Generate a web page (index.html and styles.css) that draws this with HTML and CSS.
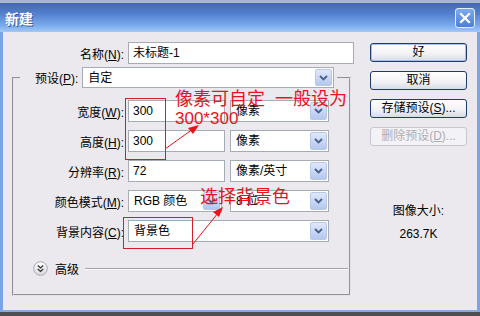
FILE: index.html
```html
<!DOCTYPE html>
<html lang="zh-CN">
<head>
  <meta charset="UTF-8">
  <title>新建</title>
  <link rel="stylesheet" href="styles.css">
</head>
<body>

<div class="window">
  <div class="titlebar">
    <span class="title">新建</span>
    <span class="close">
      <svg width="12" height="12" viewBox="0 0 12 12"><path d="M2 2 L10 10 M10 2 L2 10" stroke="#fff" stroke-width="2.2" stroke-linecap="square"/></svg>
    </span>
  </div>

  <div class="body">
    <div class="main">
      <div class="row name-row">
        <label class="lbl">名称(<u>N</u>):</label>
        <div class="field w-name">未标题-1</div>
      </div>

      <fieldset class="group">
        <legend>
          <div class="preset">
            <label>预设(<u>P</u>):</label>
            <div class="select w-preset"><span class="val">自定</span><span class="drop"><svg width="9" height="6" viewBox="0 0 9 6"><path d="M1 1 L4.5 4.5 L8 1" fill="none" stroke="#4a5f86" stroke-width="1.8"/></svg></span></div>
          </div>
        </legend>

        <div class="row">
          <label class="lbl">宽度(<u>W</u>):</label>
          <div class="field w-num">300</div>
          <div class="select w-unit"><span class="val">像素</span><span class="drop"><svg width="9" height="6" viewBox="0 0 9 6"><path d="M1 1 L4.5 4.5 L8 1" fill="none" stroke="#4a5f86" stroke-width="1.8"/></svg></span></div>
        </div>
        <div class="row">
          <label class="lbl">高度(<u>H</u>):</label>
          <div class="field w-num">300</div>
          <div class="select w-unit"><span class="val">像素</span><span class="drop"><svg width="9" height="6" viewBox="0 0 9 6"><path d="M1 1 L4.5 4.5 L8 1" fill="none" stroke="#4a5f86" stroke-width="1.8"/></svg></span></div>
        </div>
        <div class="row">
          <label class="lbl">分辨率(<u>R</u>):</label>
          <div class="field w-num">72</div>
          <div class="select w-unit"><span class="val">像素/英寸</span><span class="drop"><svg width="9" height="6" viewBox="0 0 9 6"><path d="M1 1 L4.5 4.5 L8 1" fill="none" stroke="#4a5f86" stroke-width="1.8"/></svg></span></div>
        </div>
        <div class="row">
          <label class="lbl">颜色模式(<u>M</u>):</label>
          <div class="select w-color"><span class="val">RGB 颜色</span><span class="drop"><svg width="9" height="6" viewBox="0 0 9 6"><path d="M1 1 L4.5 4.5 L8 1" fill="none" stroke="#4a5f86" stroke-width="1.8"/></svg></span></div>
          <div class="select w-depth"><span class="val">8 位</span><span class="drop"><svg width="9" height="6" viewBox="0 0 9 6"><path d="M1 1 L4.5 4.5 L8 1" fill="none" stroke="#4a5f86" stroke-width="1.8"/></svg></span></div>
        </div>
        <div class="row">
          <label class="lbl">背景内容(<u>C</u>):</label>
          <div class="select w-bg"><span class="val">背景色</span><span class="drop"><svg width="9" height="6" viewBox="0 0 9 6"><path d="M1 1 L4.5 4.5 L8 1" fill="none" stroke="#4a5f86" stroke-width="1.8"/></svg></span></div>
        </div>

        <div class="advanced">
          <svg class="expand" width="15" height="15" viewBox="0 0 15 15">
            <defs>
              <linearGradient id="eg" x1="0" y1="0" x2="0" y2="1">
                <stop offset="0" stop-color="#ffffff"/>
                <stop offset="1" stop-color="#d9d8e0"/>
              </linearGradient>
            </defs>
            <circle cx="7.5" cy="7.5" r="6.8" fill="url(#eg)" stroke="#a9a8b2"/>
            <path d="M4.8 4.6 L7.5 7 L10.2 4.6 M4.8 8 L7.5 10.4 L10.2 8" fill="none" stroke="#333" stroke-width="1.3"/>
          </svg>
          <span>高级</span>
          <span class="rule"></span>
        </div>
      </fieldset>
    </div>

    <div class="side">
      <button class="btn default">好</button>
      <button class="btn">取消</button>
      <button class="btn">存储预设(<u>S</u>)...</button>
      <button class="btn" disabled>删除预设(<u>D</u>)...</button>
      <div class="size-label">图像大小:</div>
      <div class="size-value">263.7K</div>
    </div>
  </div>

  <!-- 红色标注 -->
  <div class="mark mark-size"></div>
  <div class="note note-size"><span>像素可自定</span><span class="gap">一般设为</span><br><span class="num">300*300</span></div>
  <div class="mark mark-bg"></div>
  <div class="note note-bg">选择背景色</div>
  <svg class="arrows" width="480" height="316" viewBox="0 0 480 316">
    <line x1="165" y1="149" x2="193" y2="129" stroke="#e8141c" stroke-width="1"/>
    <path d="M199 125 L188 128 L193 134 Z" fill="#e8141c"/>
    <line x1="193" y1="244" x2="218" y2="213" stroke="#e8141c" stroke-width="1"/>
    <path d="M223 207 L213 212 L219 217 Z" fill="#e8141c"/>
  </svg>
</div>

</body>
</html>
```

FILE: styles.css
```css
/* Ventana estilo XP */
* {
  box-sizing: border-box;
}
html, body {
  margin: 0;
  padding: 0;
  background: #4f4f52;
}
body {
  font-family: "Liberation Sans", "Noto Sans CJK SC", sans-serif;
  font-size: 12px;
  color: #000;
}
u {
  text-decoration: underline;
  text-underline-offset: 1px;
}
.window {
  position: relative;
  width: 480px;
  height: 312px;
  background: #ebe9ee;
  border-left: 3px solid #7ba4e6;
  border-right: 3px solid #7ba4e6;
  border-bottom: 2px solid #86ace6;
}
.titlebar {
  height: 32px;
  margin: 0 -3px;
  padding: 0 5px;
  border-top: 3px solid #aab6cc;
  display: flex;
  align-items: center;
  justify-content: space-between;
  background: linear-gradient(to bottom, #4467ae 0%, #527fcd 35%, #77a7ea 75%, #a2c9f6 100%);
}
.title {
  color: #fff;
  font-weight: bold;
  font-size: 14px;
  text-shadow: 1px 1px 0 #3c5a98;
  font-family: "Noto Sans CJK SC", sans-serif;
}
.close {
  width: 20px;
  height: 20px;
  border: 1px solid #e6eefc;
  border-radius: 3px;
  background: linear-gradient(to bottom, #7eabef, #4b7ed8);
  display: flex;
  align-items: center;
  justify-content: center;
}
.body {
  display: flex;
  padding-top: 10px;
}
.main {
  width: 352px;
  padding-left: 9px;
}
.row {
  display: flex;
  align-items: center;
  height: 22px;
}
.lbl {
  width: 110px;
  margin-right: 4px;
  text-align: right;
  white-space: nowrap;
}
.name-row .lbl {
  width: 112px;
}
.field {
  height: 22px;
  border: 1px solid #a5acb5;
  background: #fff;
  padding: 0 4px;
  line-height: 20px;
}
.select {
  display: flex;
  height: 22px;
  border: 1px solid #a5acb5;
  background: #fff;
  padding: 1px;
}
.select .val {
  flex: 1;
  padding-left: 4px;
  line-height: 18px;
  white-space: nowrap;
}
.drop {
  width: 17px;
  border: 1px solid #b9c8e6;
  border-radius: 2px;
  background: linear-gradient(to bottom, #dfe8fb, #b4c7ee);
  display: flex;
  align-items: center;
  justify-content: center;
}
.w-name { width: 226px; }
.w-num { width: 97px; }
.w-unit { width: 99px; margin-left: 5px; }
.w-color { width: 94px; }
.w-depth { width: 99px; margin-left: 8px; }
.w-bg { width: 201px; }
.w-preset { width: 252px; height: 21px; }

.group {
  width: 339px;
  margin: 3px 0 0 0;
  padding: 12px 0 18px 0;
  min-width: 0;
  border: 2px groove #e4e2ea;
}
.group legend {
  margin-left: 6px;
  padding: 0 3px 0 15px;
}
.preset {
  display: flex;
  align-items: center;
  gap: 4px;
}
.group .row + .row {
  margin-top: 8px;
}
.advanced {
  display: flex;
  align-items: center;
  height: 15px;
  margin-top: 19px;
  padding-left: 19px;
}
.expand {
  margin-right: 7px;
}
.rule {
  flex: 1;
  height: 2px;
  margin-left: 6px;
  margin-right: 1px;
  border-top: 1px solid #a3a2ab;
  border-bottom: 1px solid #fff;
}

.side {
  width: 97px;
  margin-left: 15px;
  padding-top: 1px;
}
.btn {
  display: block;
  width: 97px;
  height: 19px;
  margin: 0 0 9px 0;
  padding: 0;
  font: inherit;
  line-height: 17px;
  color: #000;
  border: 1px solid #1f3a6c;
  border-radius: 3px;
  background: linear-gradient(to bottom, #ffffff, #f1f1f4 60%, #d6dbe6);
}
.btn.default {
  box-shadow: inset 0 0 0 1px #a8c0ec;
}
.btn:disabled {
  color: #aeadb3;
  border-color: #c8c7cf;
  background: #f3f2f6;
}
.size-label, .size-value {
  text-align: center;
  line-height: 14px;
}
.size-label {
  margin-top: 58px;
}
.size-value {
  margin-top: 9px;
}

/* Anotaciones rojas */
.mark {
  position: absolute;
  border: 1px solid #d41e26;
}
.mark-size {
  left: 122px;
  top: 98px;
  width: 41px;
  height: 62px;
}
.mark-bg {
  left: 120px;
  top: 217px;
  width: 70px;
  height: 32px;
}
.note {
  position: absolute;
  color: #e8141c;
  font-family: "Noto Sans CJK SC", sans-serif;
  font-size: 18px;
  line-height: 19px;
  white-space: nowrap;
}
.note-size {
  left: 172px;
  top: 88px;
}
.note-size .gap {
  margin-left: 10px;
}
.note-size .num {
  font-family: "Liberation Sans", sans-serif;
  font-size: 17px;
}
.note-bg {
  left: 197px;
  top: 186px;
}
.arrows {
  position: absolute;
  left: -3px;
  top: 0;
  pointer-events: none;
}
```
